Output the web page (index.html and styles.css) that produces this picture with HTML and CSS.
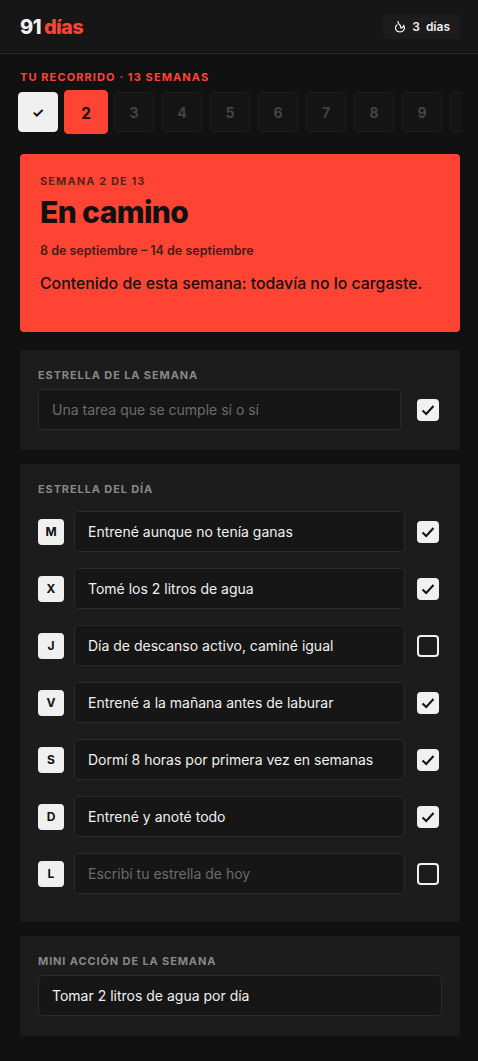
FILE: index.html
```html
<!DOCTYPE html>
<html lang="es">
<head>
<meta charset="utf-8">
<title>91 días</title>
<link rel="stylesheet" href="styles.css">
</head>
<body>
<header class="topbar">
  <div class="logo"><span class="logo-num">91</span><span class="logo-word">días</span></div>
  <div class="streak">
    <svg class="flame" viewBox="0 0 10 12" width="10" height="12" fill="none" stroke="currentColor" stroke-width="1.2" stroke-linecap="round"><path d="M3 .4C2.9 1.8 3.4 2.6 4.4 3.5 5.5 4.5 6 5.4 5.5 6.6"/><path d="M1.9 3.8C.6 5.2.2 7 .9 8.7 2 11.4 7 11.8 8.8 9 9.8 7.4 9.5 5.8 8.6 4.7 8.3 6 7.4 6.9 6.2 7.2"/></svg>
    <span class="streak-text">3 días</span>
  </div>
</header>
<main class="page">
  <section class="journey">
    <div class="journey-label">TU RECORRIDO · 13 SEMANAS</div>
    <div class="weeks">
      <div class="week week-done">✓</div>
      <div class="week week-current">2</div>
      <div class="week">3</div>
      <div class="week">4</div>
      <div class="week">5</div>
      <div class="week">6</div>
      <div class="week">7</div>
      <div class="week">8</div>
      <div class="week">9</div>
      <div class="week week-cut"></div>
    </div>
  </section>

  <section class="hero">
    <div class="hero-kicker">SEMANA 2 DE 13</div>
    <h1 class="hero-title">En camino</h1>
    <div class="hero-dates">8 de septiembre – 14 de septiembre</div>
    <p class="hero-note">Contenido de esta semana: todavía no lo cargaste.</p>
  </section>

  <section class="card">
    <div class="card-label">ESTRELLA DE LA SEMANA</div>
    <div class="row row-week">
      <input class="field" type="text" placeholder="Una tarea que se cumple sí o sí">
      <span class="check is-on"><svg viewBox="0 0 14 14" width="14" height="14" fill="none" stroke="currentColor" stroke-width="2"><path d="M1.5 7.5 5.2 11 12.5 3"/></svg></span>
    </div>
  </section>

  <section class="card">
    <div class="card-label card-label-days">ESTRELLA DEL DÍA</div>
    <div class="days">
      <div class="row"><span class="day">M</span><input class="field" type="text" value="Entrené aunque no tenía ganas"><span class="check is-on"><svg viewBox="0 0 14 14" width="14" height="14" fill="none" stroke="currentColor" stroke-width="2"><path d="M1.5 7.5 5.2 11 12.5 3"/></svg></span></div>
      <div class="row"><span class="day">X</span><input class="field" type="text" value="Tomé los 2 litros de agua"><span class="check is-on"><svg viewBox="0 0 14 14" width="14" height="14" fill="none" stroke="currentColor" stroke-width="2"><path d="M1.5 7.5 5.2 11 12.5 3"/></svg></span></div>
      <div class="row"><span class="day">J</span><input class="field" type="text" value="Día de descanso activo, caminé igual"><span class="check"></span></div>
      <div class="row"><span class="day">V</span><input class="field" type="text" value="Entrené a la mañana antes de laburar"><span class="check is-on"><svg viewBox="0 0 14 14" width="14" height="14" fill="none" stroke="currentColor" stroke-width="2"><path d="M1.5 7.5 5.2 11 12.5 3"/></svg></span></div>
      <div class="row"><span class="day">S</span><input class="field" type="text" value="Dormí 8 horas por primera vez en semanas"><span class="check is-on"><svg viewBox="0 0 14 14" width="14" height="14" fill="none" stroke="currentColor" stroke-width="2"><path d="M1.5 7.5 5.2 11 12.5 3"/></svg></span></div>
      <div class="row"><span class="day">D</span><input class="field" type="text" value="Entrené y anoté todo"><span class="check is-on"><svg viewBox="0 0 14 14" width="14" height="14" fill="none" stroke="currentColor" stroke-width="2"><path d="M1.5 7.5 5.2 11 12.5 3"/></svg></span></div>
      <div class="row"><span class="day">L</span><input class="field" type="text" placeholder="Escribí tu estrella de hoy"><span class="check"></span></div>
    </div>
  </section>

  <section class="card">
    <div class="card-label">MINI ACCIÓN DE LA SEMANA</div>
    <input class="field" type="text" value="Tomar 2 litros de agua por día">
  </section>
</main>
</body>
</html>
```
FILE: styles.css
```css
* { box-sizing: border-box; }
html { margin: 0; padding: 0; overflow: hidden; }
body {
  margin: 0;
  width: 480px;
  height: 1061px;
  overflow: hidden;
  background: #111111;
  color: #f0f0f0;
  font-family: Inter, "Liberation Sans", sans-serif;
}
.topbar {
  height: 54px;
  background: #161616;
  border-bottom: 1px solid #2a2a2a;
  padding: 0 20px;
  display: flex;
  align-items: center;
  justify-content: space-between;
}
.logo { font-size: 20px; font-weight: 800; letter-spacing: -0.6px; display: flex; gap: 3px; }
.logo-num { color: #f0f0f0; }
.logo-word { color: #ff4433; }
.streak {
  display: flex; align-items: center; gap: 7px;
  height: 25px; padding: 0 10px 0 12px;
  background: #1c1c1c; border-radius: 4px;
  font-size: 12px; font-weight: 600; color: #f0f0f0;
}
.streak-text { word-spacing: 3px; }
.flame { flex: none; }
.page { padding: 0 20px; }
.journey { padding-top: 17px; }
.journey-label { font-size: 11px; font-weight: 700; letter-spacing: 1.1px; color: #ff4433; line-height: 13px; }
.weeks {
  display: flex; gap: 8px; margin: 6px -2px 0; padding: 2px 0; overflow: hidden;
}
.week {
  flex: 0 0 40px; height: 40px;
  display: flex; align-items: center; justify-content: center;
  background: #141414; border: 1px solid #1f1f1f; border-radius: 4px;
  font-size: 14px; font-weight: 700; color: #444444;
}
.week-done { background: #f0f0f0; border-color: #f0f0f0; color: #111111; }
.week-current { background: #ff4433; border-color: #ff4433; color: #111111; transform: scale(1.1); }
.hero {
  margin-top: 20px; height: 178px; padding: 20px;
  background: #ff4433; border-radius: 4px; color: #111111;
}
.hero-kicker { font-size: 11px; font-weight: 700; letter-spacing: 1.1px; line-height: 14px; opacity: .7; }
.hero-title { margin: 6px 0 0; font-size: 30px; font-weight: 800; letter-spacing: -0.6px; line-height: 36px; }
.hero-dates { margin-top: 11px; font-size: 12.5px; font-weight: 600; line-height: 20px; opacity: .8; }
.hero-note { margin: 11px 0 0; font-size: 15.85px; font-weight: 500; line-height: 24px; }
.card { margin-top: 14px; padding: 18px 18px 20px; background: #1c1c1c; border-radius: 4px; }
.hero + .card { margin-top: 18px; }
.card-label { font-size: 11px; font-weight: 700; letter-spacing: 0.88px; color: #888888; line-height: 14px; margin-bottom: 7px; }
.card-label-days { margin-bottom: 15px; }
.row { display: flex; align-items: center; }
.days { display: flex; flex-direction: column; gap: 16px; padding-bottom: 8px; }
.field {
  flex: 1 1 auto; min-width: 0; width: 100%; height: 41px; padding: 0 13px;
  background: #161616; border: 1px solid #2a2a2a; border-radius: 4px;
  color: #f0f0f0; font: 400 14px Inter, "Liberation Sans", sans-serif; outline: none;
}
.field::placeholder { color: #6b6b6b; opacity: 1; }
.day {
  flex: 0 0 26px; height: 26px; margin-right: 10px;
  display: flex; align-items: center; justify-content: center;
  background: #f0f0f0; color: #111111; border-radius: 4px;
  font-size: 12px; font-weight: 700;
}
.check {
  flex: 0 0 22px; height: 22px; margin-left: 12px; margin-right: 3px;
  display: flex; align-items: center; justify-content: center;
  border: 2px solid #f0f0f0; border-radius: 4px; color: #111111;
}
.row-week .check { margin-left: 16px; }
.check.is-on { background: #f0f0f0; }
```
